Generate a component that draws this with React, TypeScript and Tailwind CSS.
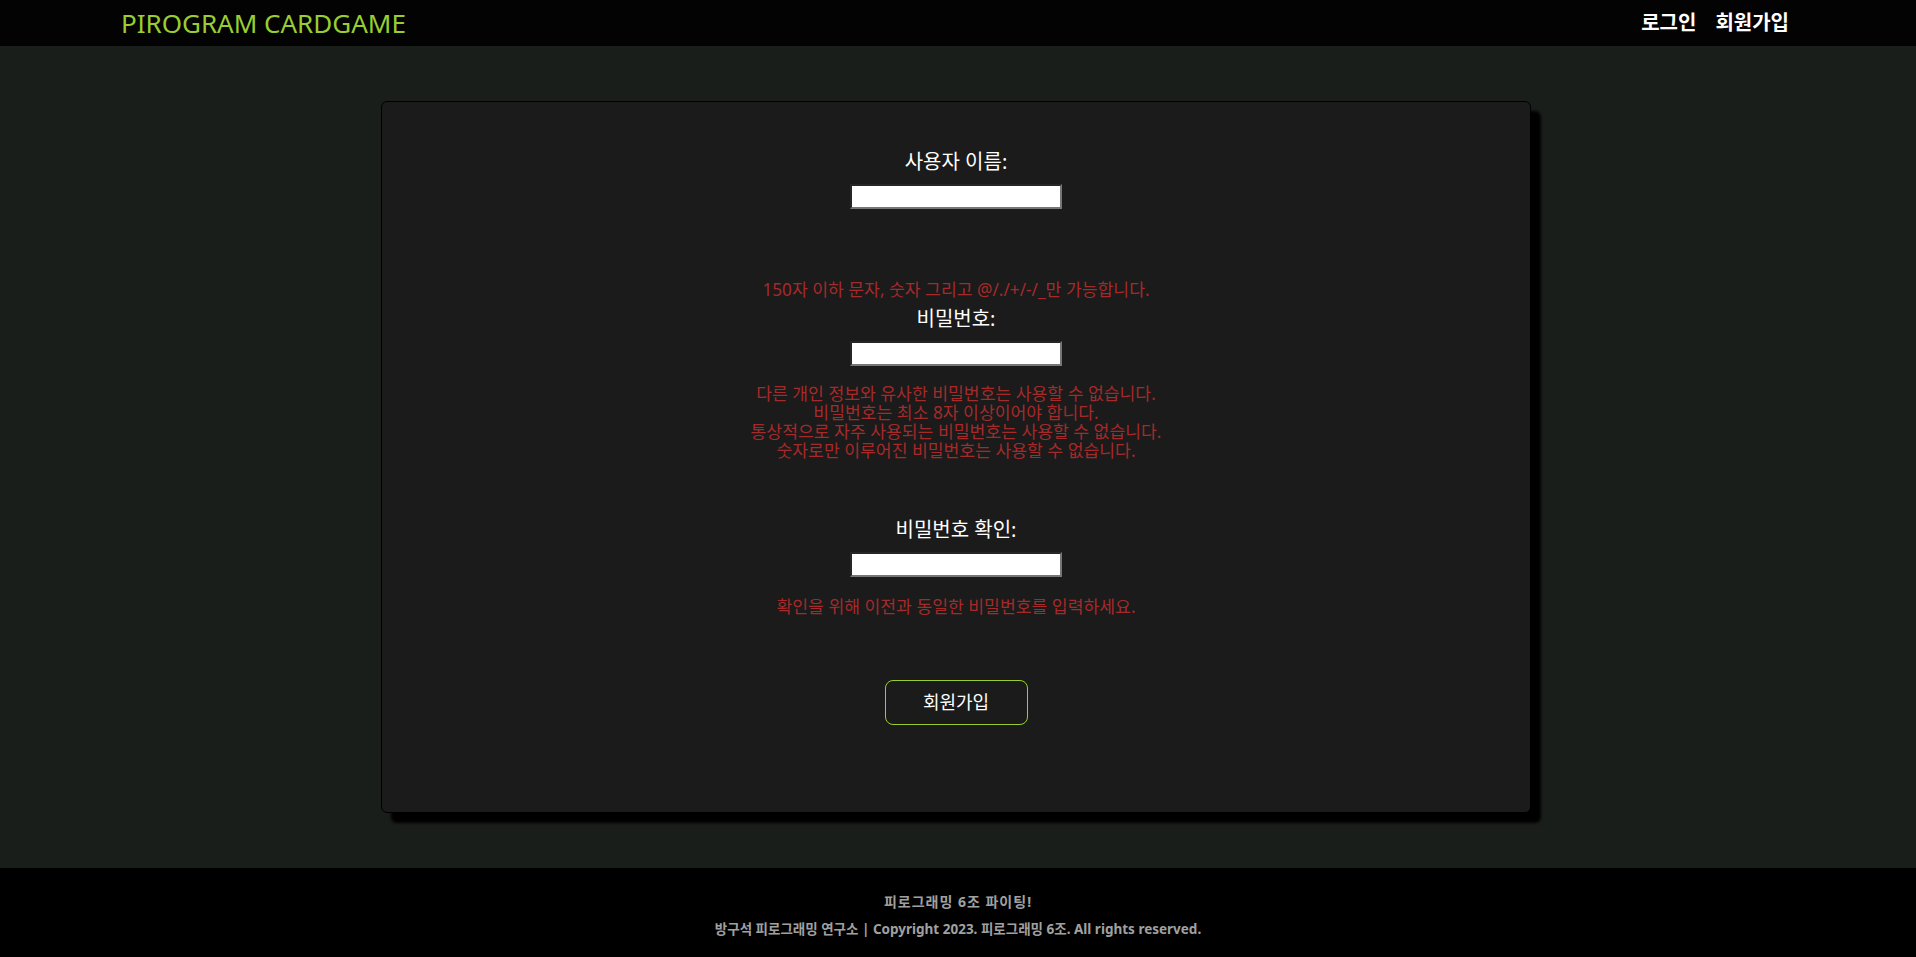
const font = "font-['Noto_Sans','Noto_Sans_CJK_KR',sans-serif]";

function Label({ text, className = "" }: { text: string; className?: string }) {
  return <label className={`block text-[20px] leading-6 text-white ${className}`}>{text}</label>;
}

function TextInput() {
  return (
    <input
      type="text"
      className="mt-[10px] block h-[25px] w-[212px] border-2 border-t-[#262626] border-l-[#262626] border-b-[#767676] border-r-[#767676] bg-white outline-none"
    />
  );
}

function Help({ lines, className = "" }: { lines: string[]; className?: string }) {
  return (
    <div className={`text-center text-[17.2px] leading-[19px] text-[#a52a2a] ${className}`}>
      {lines.map((line) => (
        <div key={line}>{line}</div>
      ))}
    </div>
  );
}

export default function App() {
  return (
    <div className={`flex min-h-screen flex-col bg-[#1a1e1b] ${font}`}>
      {/* Header */}
      <header className="flex h-[46px] items-center justify-between bg-[#030303] pl-[121px] pr-[127px]">
        <span className="text-[26px] leading-none text-[#9acd32]">PIROGRAM CARDGAME</span>
        <nav className="flex gap-[19px] text-[20px] font-bold text-white">
          <a>로그인</a>
          <a>회원가입</a>
        </nav>
      </header>

      {/* Card */}
      <main className="flex flex-1 justify-center py-[55px]">
        <div className="flex h-[712px] w-[1150px] -translate-x-[2px] flex-col items-center rounded-md border border-black bg-[#1b1b1b] pt-[48px] shadow-[10px_10px_3px_#000]">
          <Label text="사용자 이름:" />
          <TextInput />
          <Help className="mt-[71px]" lines={["150자 이하 문자, 숫자 그리고 @/./+/-/_만 가능합니다."]} />

          <Label className="mt-[8px]" text="비밀번호:" />
          <TextInput />
          <Help
            className="mt-[18px]"
            lines={[
              "다른 개인 정보와 유사한 비밀번호는 사용할 수 없습니다.",
              "비밀번호는 최소 8자 이상이어야 합니다.",
              "통상적으로 자주 사용되는 비밀번호는 사용할 수 없습니다.",
              "숫자로만 이루어진 비밀번호는 사용할 수 없습니다.",
            ]}
          />

          <Label className="mt-[58px]" text="비밀번호 확인:" />
          <TextInput />
          <Help className="mt-[20px]" lines={["확인을 위해 이전과 동일한 비밀번호를 입력하세요."]} />

          <button className="mt-[64px] h-[45px] w-[143px] rounded-lg border border-[#9acd32] text-[18px] text-white">
            회원가입
          </button>
        </div>
      </main>

      {/* Footer */}
      <footer className="flex h-[89px] flex-col items-center gap-[7px] bg-black pt-[24px] font-bold text-[#a0a0a0]">
        <p className="text-[14px] leading-5 tracking-[1px]">피로그래밍 6조 파이팅!</p>
        <p className="text-[13.5px] leading-5">
          방구석 피로그래밍 연구소 | Copyright 2023. 피로그래밍 6조. All rights reserved.
        </p>
      </footer>
    </div>
  );
}
